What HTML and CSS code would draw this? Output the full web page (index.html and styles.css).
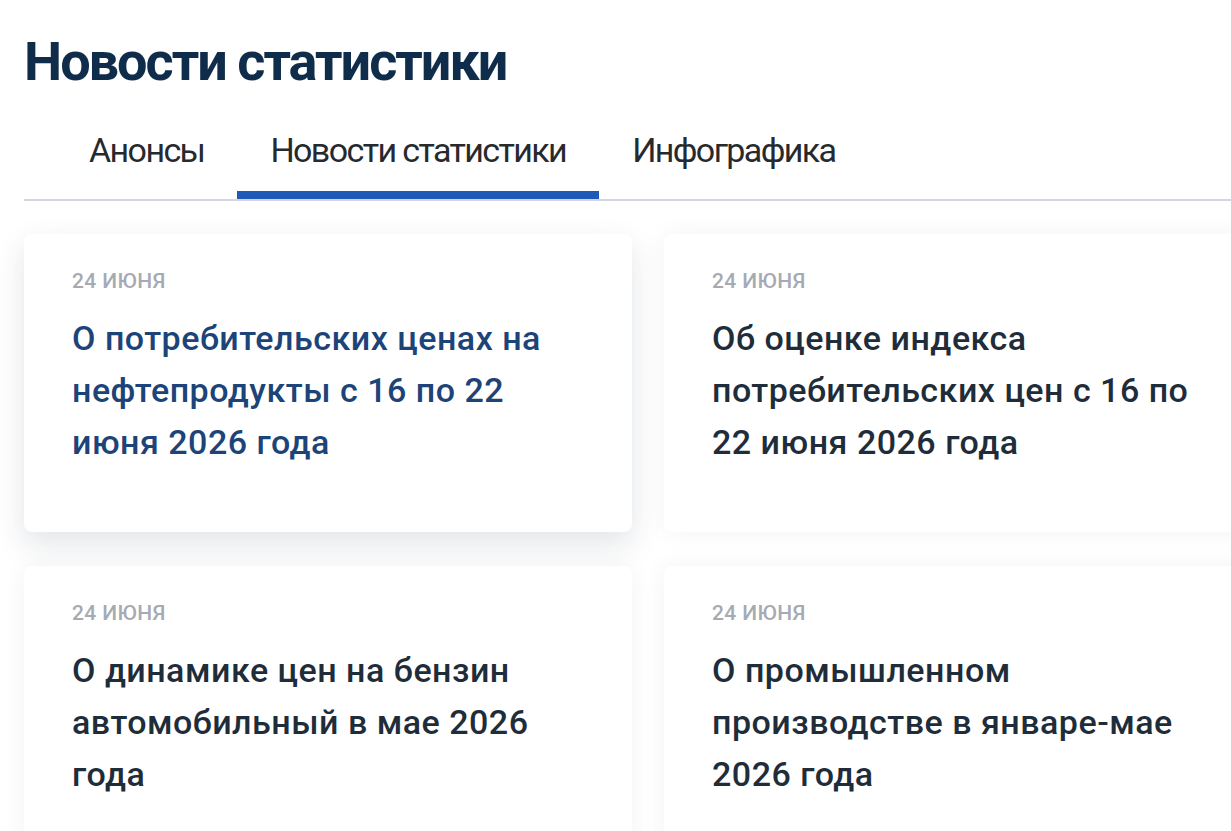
FILE: index.html
```html
<!DOCTYPE html>
<html lang="ru">
<head>
    <meta charset="UTF-8">
    <meta name="viewport" content="width=device-width, initial-scale=1.0">
    <title>Новости статистики</title>
    <link rel="stylesheet" href="styles.css">
</head>
<body>
    <div class="page">
        <h1>Новости статистики</h1>
        <nav class="tabs">
            <a class="tab" href="#">Анонсы</a>
            <a class="tab active" href="#">Новости статистики</a>
            <a class="tab" href="#">Инфографика</a>
        </nav>
        <div class="news-grid">
            <a class="news-card hover" href="#">
                <div class="news-date">24 июня</div>
                <div class="news-title">О потребительских ценах на нефтепродукты с 16 по 22 июня 2026 года</div>
            </a>
            <a class="news-card" href="#">
                <div class="news-date">24 июня</div>
                <div class="news-title">Об оценке индекса потребительских цен с 16 по 22 июня 2026 года</div>
            </a>
            <a class="news-card" href="#">
                <div class="news-date">24 июня</div>
                <div class="news-title">О динамике цен на бензин автомобильный в мае 2026 года</div>
            </a>
            <a class="news-card" href="#">
                <div class="news-date">24 июня</div>
                <div class="news-title">О промышленном производстве в январе-мае 2026 года</div>
            </a>
        </div>
    </div>
</body>
</html>
```

FILE: styles.css
```css
body {
    margin: 0;
    background: #fff;
    font-family: Roboto, 'Liberation Sans', sans-serif;
    overflow: hidden;
}
.page {
    width: 1248px;
    padding: 32px 0 0 24px;
}
h1 {
    margin: 0;
    font-size: 54px;
    line-height: 60px;
    font-weight: 700;
    letter-spacing: -2px;
    color: #0f2d4a;
}
.tabs {
    display: flex;
    margin-top: 38px;
    padding-left: 32px;
    border-bottom: 2px solid #d3d5e0;
}
.tab {
    padding: 0 33px 21px;
    font-size: 34px;
    line-height: 40px;
    letter-spacing: -1.6px;
    color: #262a2e;
    text-decoration: none;
    border-bottom: 8px solid transparent;
}
.tab.active {
    border-bottom-color: #1f5ab8;
}
.news-grid {
    display: grid;
    grid-template-columns: 608px 608px;
    column-gap: 32px;
    row-gap: 34px;
    margin-top: 33px;
}
.news-card {
    display: block;
    min-height: 199px;
    padding: 35px 48px 64px;
    background: #fff;
    border-radius: 8px;
    box-shadow: 0 0 24px rgba(30, 45, 70, 0.05);
    text-decoration: none;
}
.news-card.hover {
    box-shadow: 0 12px 30px rgba(30, 45, 70, 0.13);
}
.news-date {
    font-size: 21px;
    line-height: 24px;
    font-weight: 500;
    letter-spacing: 0.4px;
    text-transform: uppercase;
    color: #a5aab3;
}
.news-title {
    margin-top: 19px;
    font-size: 34px;
    line-height: 52px;
    font-weight: 500;
    letter-spacing: 0.5px;
    color: #1f2d3a;
}
.news-card.hover .news-title {
    color: #1c4479;
}
```
